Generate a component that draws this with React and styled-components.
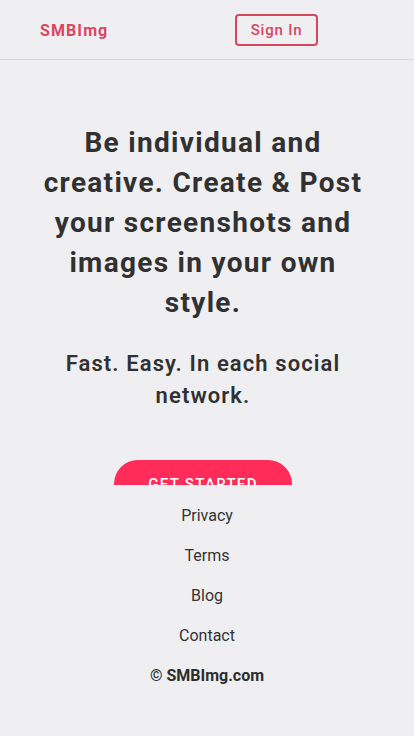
import React from 'react';
import styled, { createGlobalStyle } from 'styled-components';

const GlobalStyle = createGlobalStyle`
body {
  margin: 0;
  background: #efeff1;
  font-family: Roboto, "Liberation Sans", sans-serif;
  color: #333333;
}`

function App() {
    return (
        <>
            <GlobalStyle />
            <Header>
                <Logo>SMBImg</Logo>
                <SignIn>Sign In</SignIn>
            </Header>
            <Hero>
                <Title>
                    Be individual and creative. Create &amp; Post your screenshots and images in your own style.
                </Title>
                <Subtitle>
                    Fast. Easy. In each social network.
                </Subtitle>
                <StartButton>Get Started</StartButton>
            </Hero>
            <Footer>
                <FooterLink>Privacy</FooterLink>
                <FooterLink>Terms</FooterLink>
                <FooterLink>Blog</FooterLink>
                <FooterLink>Contact</FooterLink>
                <Copyright>© SMBImg.com</Copyright>
            </Footer>
        </>
    );
}

export default App;

const Header = styled.header`
height: 60px;
display: flex;
align-items: center;
justify-content: space-between;
padding: 1px 96px 0 40px;
box-sizing: border-box;
border-bottom: 1px solid #d6d6d8;`

const Logo = styled.div`
color: #dc4562;
font-size: 16px;
font-weight: 700;
letter-spacing: 1.1px;`

const SignIn = styled.button`
width: 83px;
height: 32px;
border: 2px solid #d4475f;
border-radius: 4px;
background: transparent;
color: #d4475f;
font-family: Roboto, "Liberation Sans", sans-serif;
font-size: 15px;
font-weight: 500;
letter-spacing: 0.8px;
padding: 0;`

const Hero = styled.main`
height: 425px;
overflow: hidden;
display: flex;
flex-direction: column;
align-items: center;
text-align: center;
padding: 0 44px 0 36px;
box-sizing: border-box;`

const Title = styled.h1`
margin: 63px 0 0;
max-width: 326px;
font-size: 28px;
line-height: 40px;
font-weight: 700;
letter-spacing: 1.3px;
color: #313131;`

const Subtitle = styled.h2`
margin: 25px 0 0;
max-width: 300px;
font-size: 22px;
line-height: 32px;
font-weight: 600;
letter-spacing: 1.1px;
color: #313131;`

const StartButton = styled.button`
flex-shrink: 0;
margin-top: 48px;
width: 178px;
height: 48px;
border: none;
border-radius: 24px;
background: #ff2b58;
color: #ffffff;
font-family: Roboto, "Liberation Sans", sans-serif;
font-size: 15px;
font-weight: 500;
letter-spacing: 1.3px;
text-transform: uppercase;`

const Footer = styled.footer`
display: flex;
flex-direction: column;
align-items: center;
padding-top: 21px;`

const FooterLink = styled.a`
height: 40px;
font-size: 16px;
line-height: 20px;
color: #333333;`

const Copyright = styled.div`
font-size: 16px;
line-height: 20px;
font-weight: 700;
color: #2d2d2d;`
